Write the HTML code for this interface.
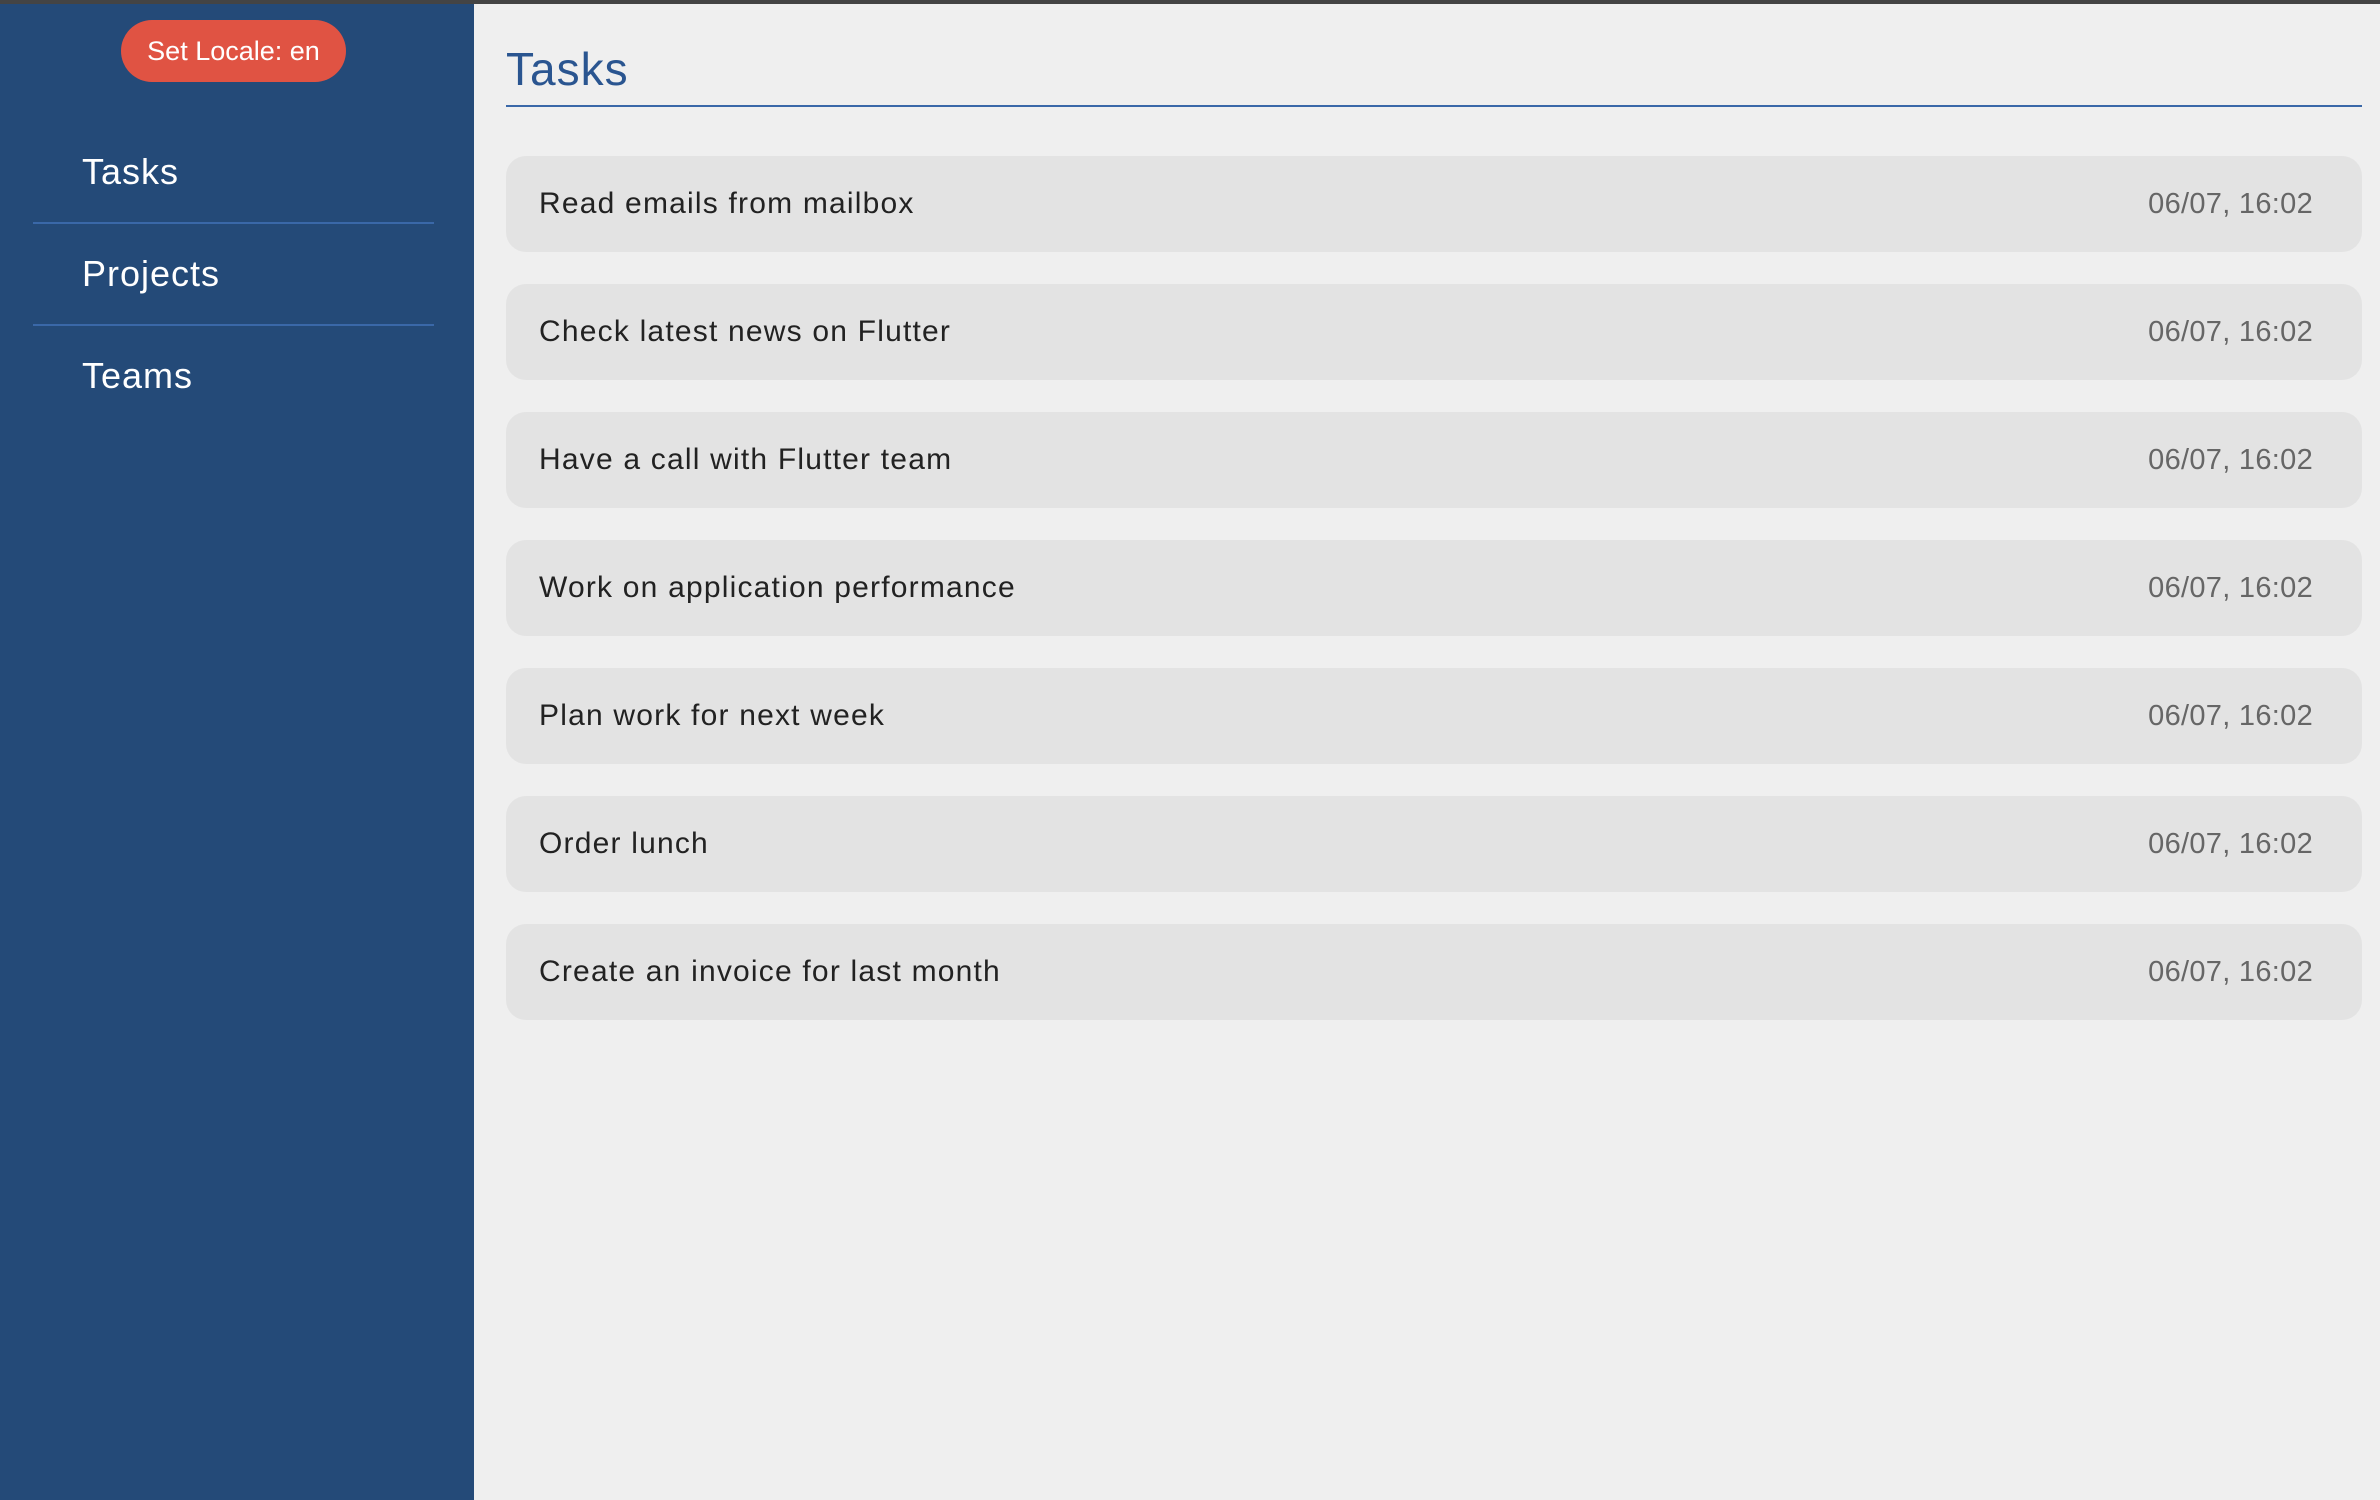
<!DOCTYPE html>
<html><head><meta charset="utf-8"><style>
*{margin:0;padding:0;box-sizing:border-box}
html,body{width:2380px;height:1500px;overflow:hidden;background:#efefef;font-family:"Liberation Sans",sans-serif}
.top{position:absolute;left:0;top:0;width:2380px;height:4px;background:#444}
.side{position:absolute;left:0;top:4px;width:474px;height:1496px;background:#244a78}
.btn{position:absolute;left:121px;top:16px;width:225px;height:62px;border-radius:31px;background:#e05343;color:#fff;font-size:27px;line-height:62px;text-align:center}
.nav{position:absolute;left:82px;color:#fff;font-size:36px;letter-spacing:1px}
.div{position:absolute;left:33px;width:401px;height:2px;background:#3a68a8}
h1{position:absolute;left:506px;top:42px;font-weight:normal;font-size:46px;color:#2a5590;letter-spacing:1px}
.ul{position:absolute;left:506px;top:105px;width:1856px;height:2px;background:#3a68a8}
.card{position:absolute;left:506px;width:1856px;height:96px;border-radius:20px;background:#e3e3e3}
.card .t{position:absolute;left:33px;top:0;line-height:96px;font-size:30px;color:#222;letter-spacing:1.2px}
.card .d{position:absolute;right:49px;top:0;line-height:96px;font-size:29px;color:#666;letter-spacing:0.3px}
</style></head><body>
<div class="top"></div>
<div class="side">
<div class="btn">Set Locale: en</div>
</div>
<div class="nav" style="top:151px">Tasks</div>
<div class="div" style="top:222px"></div>
<div class="nav" style="top:253px">Projects</div>
<div class="div" style="top:324px"></div>
<div class="nav" style="top:355px">Teams</div>
<h1>Tasks</h1>
<div class="ul"></div>
<div class="card" style="top:156px"><span class="t">Read emails from mailbox</span><span class="d">06/07, 16:02</span></div>
<div class="card" style="top:284px"><span class="t">Check latest news on Flutter</span><span class="d">06/07, 16:02</span></div>
<div class="card" style="top:412px"><span class="t">Have a call with Flutter team</span><span class="d">06/07, 16:02</span></div>
<div class="card" style="top:540px"><span class="t">Work on application performance</span><span class="d">06/07, 16:02</span></div>
<div class="card" style="top:668px"><span class="t">Plan work for next week</span><span class="d">06/07, 16:02</span></div>
<div class="card" style="top:796px"><span class="t">Order lunch</span><span class="d">06/07, 16:02</span></div>
<div class="card" style="top:924px"><span class="t">Create an invoice for last month</span><span class="d">06/07, 16:02</span></div>
</body></html>
